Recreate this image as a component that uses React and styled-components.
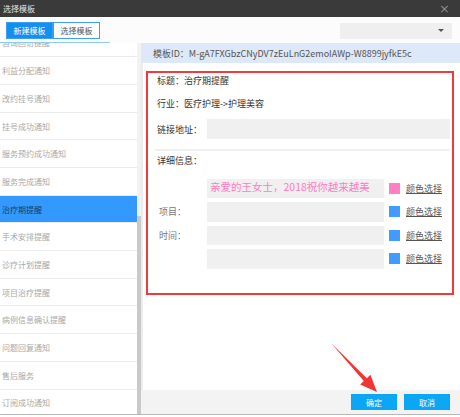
import React from 'react';
import styled, { createGlobalStyle } from 'styled-components';

const GlobalStyle = createGlobalStyle`
  body {
    margin: 0;
    font-family: "Noto Sans CJK SC", "Noto Sans", sans-serif;
    background: #fff;
  }
`;

const Window = styled.div`
  position: relative;
  width: 460px;
  height: 417px;
  overflow: hidden;
  background: #fff;
  display: flex;
  flex-direction: column;
`;

const TitleBar = styled.div`
  height: 17px;
  flex-shrink: 0;
  background: #3a3a3a;
  color: #e2e2e2;
  font-size: 8px;
  display: flex;
  align-items: center;
  justify-content: space-between;
  padding: 0 10px 0 3px;
`;

const Close = styled.span`
  color: #8a8a8a;
  font-size: 13px;
  font-family: "DejaVu Sans", sans-serif;
  line-height: 1;
`;

const Toolbar = styled.div`
  height: 26px;
  flex-shrink: 0;
  display: flex;
  flex-direction: column;
  background: #fcfcfc;
`;

const ToolbarRow = styled.div`
  height: 25px;
  display: flex;
  align-items: center;
  justify-content: space-between;
  padding: 0 8px 0 6px;
`;

const Underline = styled.div`
  width: 110px;
  height: 1px;
  background: #8fcaf2;
`;

const Tabs = styled.div`
  display: flex;
  margin-top: 2px;
`;

const Tab = styled.div`
  width: 47px;
  height: 17px;
  box-sizing: border-box;
  display: flex;
  align-items: center;
  justify-content: center;
  font-size: 8px;
  color: ${(p) => (p.$active ? '#fff' : '#555')};
  background: ${(p) => (p.$active ? '#1190f2' : '#fff')};
  border: 1px solid #3f9fee;
`;

const Select = styled.div`
  width: 112px;
  height: 16px;
  margin-top: 2px;
  background: #efefef;
  display: flex;
  align-items: center;
  justify-content: flex-end;
  padding-right: 8px;
  box-sizing: border-box;
`;

const Caret = styled.span`
  width: 0;
  height: 0;
  border-left: 3px solid transparent;
  border-right: 3px solid transparent;
  border-top: 3px solid #555;
`;

const Body = styled.div`
  height: 371px;
  flex-shrink: 0;
  display: flex;
`;

const Sidebar = styled.div`
  width: 141px;
  display: flex;
  overflow: hidden;
`;

const List = styled.ul`
  list-style: none;
  margin: -13.4px 0 0;
  padding: 0;
  width: 137px;
`;

const Item = styled.li`
  height: 27.7px;
  box-sizing: border-box;
  border-bottom: 1px solid #ececec;
  display: flex;
  align-items: center;
  padding-left: 2px;
  font-size: 8px;
  color: ${(p) => (p.$active ? '#123f70' : '#a8a8a8')};
  background: ${(p) => (p.$active ? '#3399ff' : '#fff')};
`;

const Scrollbar = styled.div`
  width: 4px;
  background: #f2f2f2;
  display: flex;
  flex-direction: column;
  justify-content: flex-end;
`;

const Thumb = styled.div`
  height: 198px;
  background: #c9c9c9;
`;

const Main = styled.div`
  flex: 1;
  display: flex;
  flex-direction: column;
  border-left: 2px solid #ececec;
`;

const IdBar = styled.div`
  height: 20px;
  flex-shrink: 0;
  background: #dde8f8;
  display: flex;
  align-items: center;
  padding-left: 12px;
  font-size: 9px;
  color: #555;
  margin-left: -2px;
`;

const Frame = styled.div`
  margin: 8px 6px 0 3px;
  height: 224px;
  box-sizing: border-box;
  border: 2px solid #f23a3a;
  padding: 0 0 0 7px;
  display: flex;
  flex-direction: column;
`;

const InfoLine = styled.div`
  height: 16px;
  line-height: 16px;
  margin-top: ${(p) => p.$mt || 0}px;
  padding-left: 2px;
  font-size: 9px;
  color: #333;
`;

const FieldRow = styled.div`
  display: flex;
  align-items: center;
  height: 20px;
  margin-top: 7px;
`;

const FieldLabel = styled.div`
  width: 52px;
  padding-left: ${(p) => p.$pl || 0}px;
  box-sizing: border-box;
  font-size: 9px;
  color: ${(p) => p.$color || '#333'};
`;

const Input = styled.div`
  height: 100%;
  width: ${(p) => (p.$w ? `${p.$w}px` : 'auto')};
  flex: ${(p) => (p.$w ? 'none' : 1)};
  margin-right: ${(p) => (p.$w ? 0 : 2)}px;
  background: #f0f0f0;
  box-sizing: border-box;
`;

const Divider = styled.div`
  height: 2px;
  background: #f0f0f0;
  margin: 10px 2px 0 0;
`;

const DetailList = styled.div`
  display: flex;
  flex-direction: column;
  gap: 4px;
  margin-top: 9.5px;
`;

const DetailRow = styled.div`
  display: flex;
  align-items: center;
  height: 19.5px;
`;

const Greeting = styled.div`
  font-size: 10.5px;
  color: #ff7cc2;
  padding: 1px 0 0 3px;
  line-height: 13px;
  white-space: nowrap;
`;

const Swatch = styled.span`
  width: 11px;
  height: 11px;
  margin-left: 5px;
  background: ${(p) => p.$color};
  flex-shrink: 0;
`;

const ColorLink = styled.a`
  margin-left: 6px;
  font-size: 9px;
  color: #555;
  text-decoration: underline;
`;

const Spacer = styled.div`
  flex: 1;
`;

const Footer = styled.div`
  height: 24px;
  flex-shrink: 0;
  background: #f3f3f3;
  display: flex;
  align-items: center;
  justify-content: flex-end;
  gap: 7px;
  padding-right: 10px;
  margin-left: -2px;
`;

const Button = styled.button`
  width: 46px;
  height: 16px;
  border: none;
  padding: 0;
  background: #0ba6f4;
  color: #fff;
  font-family: inherit;
  font-size: 8px;
`;

const BottomEdge = styled.div`
  height: 1px;
  background: #b8b8b8;
  flex-shrink: 0;
`;

const ArrowLayer = styled.svg`
  position: absolute;
  left: 0;
  top: 0;
  pointer-events: none;
`;

const items = [
  '咨询回访提醒',
  '利益分配通知',
  '改约挂号通知',
  '挂号成功通知',
  '服务预约成功通知',
  '服务完成通知',
  '治疗期提醒',
  '手术安排提醒',
  '诊疗计划提醒',
  '项目治疗提醒',
  '病例信息确认提醒',
  '问题回复通知',
  '售后服务',
  '订阅成功通知',
];

const details = [
  { label: '', color: '#ff80c4', text: '亲爱的王女士，2018祝你越来越美' },
  { label: '项目：', color: '#419cff' },
  { label: '时间：', color: '#419cff' },
  { label: '', color: '#419cff' },
];

export default function App() {
  return (
    <>
      <GlobalStyle />
      <Window>
        <TitleBar>
          <span>选择模板</span>
          <Close>×</Close>
        </TitleBar>
        <Toolbar>
          <ToolbarRow>
            <Tabs>
              <Tab $active>新建模板</Tab>
              <Tab>选择模板</Tab>
            </Tabs>
            <Select>
              <Caret />
            </Select>
          </ToolbarRow>
          <Underline />
        </Toolbar>
        <Body>
          <Sidebar>
            <List>
              {items.map((label) => (
                <Item key={label} $active={label === '治疗期提醒'}>
                  {label}
                </Item>
              ))}
            </List>
            <Scrollbar>
              <Thumb />
            </Scrollbar>
          </Sidebar>
          <Main>
            <IdBar>模板ID：M-gA7FXGbzCNyDV7zEuLnG2emoIAWp-W8899jyfkE5c</IdBar>
            <Frame>
              <InfoLine>标题：治疗期提醒</InfoLine>
              <InfoLine $mt={7}>行业：医疗护理-&gt;护理美容</InfoLine>
              <FieldRow>
                <FieldLabel $pl={2}>链接地址：</FieldLabel>
                <Input />
              </FieldRow>
              <Divider />
              <InfoLine $mt={2}>详细信息：</InfoLine>
              <DetailList>
                {details.map((d, i) => (
                  <DetailRow key={i}>
                    <FieldLabel $pl={4} $color="#777">
                      {d.label}
                    </FieldLabel>
                    <Input $w={177}>
                      {d.text && <Greeting>{d.text}</Greeting>}
                    </Input>
                    <Swatch $color={d.color} />
                    <ColorLink>颜色选择</ColorLink>
                  </DetailRow>
                ))}
              </DetailList>
            </Frame>
            <Spacer />
            <Footer>
              <Button>确定</Button>
              <Button>取消</Button>
            </Footer>
          </Main>
        </Body>
        <BottomEdge />
        <ArrowLayer width="460" height="417" viewBox="0 0 460 417">
          <polygon
            points="331,343 363.8,381 360.2,384.4 377,392 370.4,374.8 366.8,378.2"
            fill="#f23434"
          />
        </ArrowLayer>
      </Window>
    </>
  );
}
